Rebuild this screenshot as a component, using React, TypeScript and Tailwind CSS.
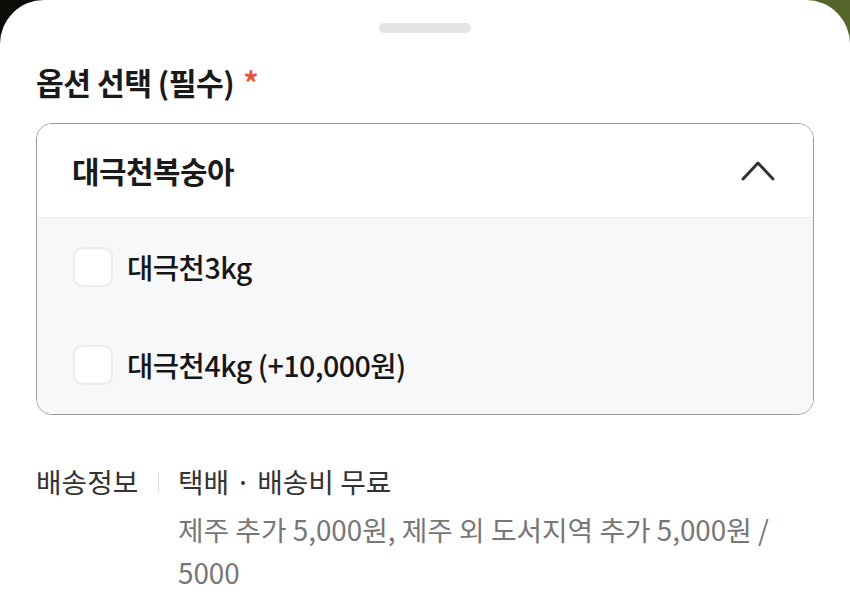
export default function App() {
  return (
    <div className="h-[605px] w-[850px] overflow-hidden bg-gradient-to-r from-[#0b0c08] via-[#2a3014] to-[#56662a]">
      <div
        className="h-full rounded-t-[44px] bg-white px-[36px] pt-[23px] text-[#111]"
        style={{ fontFamily: '"Noto Sans CJK KR", "Noto Sans", sans-serif' }}
      >
        <div className="mx-auto h-[10px] w-[92px] rounded-full bg-[#e4e4e4]" />

        <h2 className="mt-[30px] flex h-[40px] items-center text-[30.2px] font-bold tracking-[-0.5px] text-[#1a1a1a]">
          옵션 선택 (필수)
          <span className="ml-[9px] text-[#e8543f]">*</span>
        </h2>

        <div className="mt-[20px] overflow-hidden rounded-[16px] border border-[#9b9b9b]">
          <div className="flex h-[93px] items-center justify-between bg-white pl-[35px] pr-[38px]">
            <span className="text-[29.9px] font-bold tracking-[-0.5px] text-[#1a1a1a]">대극천복숭아</span>
            <svg width="34" height="22" viewBox="0 0 34 22" fill="none">
              <polyline
                points="2,19 17,3 32,19"
                stroke="#333"
                strokeWidth="3"
                strokeLinecap="round"
                strokeLinejoin="round"
              />
            </svg>
          </div>
          <div className="border-t border-[#ececec] bg-[#f7f8fa]">
            {["대극천3kg", "대극천4kg (+10,000원)"].map((label) => (
              <label key={label} className="flex h-[98px] items-center gap-[14px] pl-[36px]">
                <span className="h-[40px] w-[40px] rounded-[9px] border-2 border-[#ebebeb] bg-white" />
                <span className="text-[28.6px] font-medium tracking-[-0.5px] text-[#161616]">{label}</span>
              </label>
            ))}
          </div>
        </div>

        <div className="mt-[47px] flex h-[40px] items-center text-[27.8px] text-[#333]">
          <span className="w-[122px]">배송정보</span>
          <span className="mr-[19px] h-[20px] w-px bg-[#dcdcdc]" />
          <span>택배 · 배송비 무료</span>
        </div>
        <p className="ml-[142px] mt-[6px] text-[27.8px] leading-[43px] text-[#777]">
          제주 추가 5,000원, 제주 외 도서지역 추가 5,000원 /
          <br />
          5000
        </p>
      </div>
    </div>
  );
}
